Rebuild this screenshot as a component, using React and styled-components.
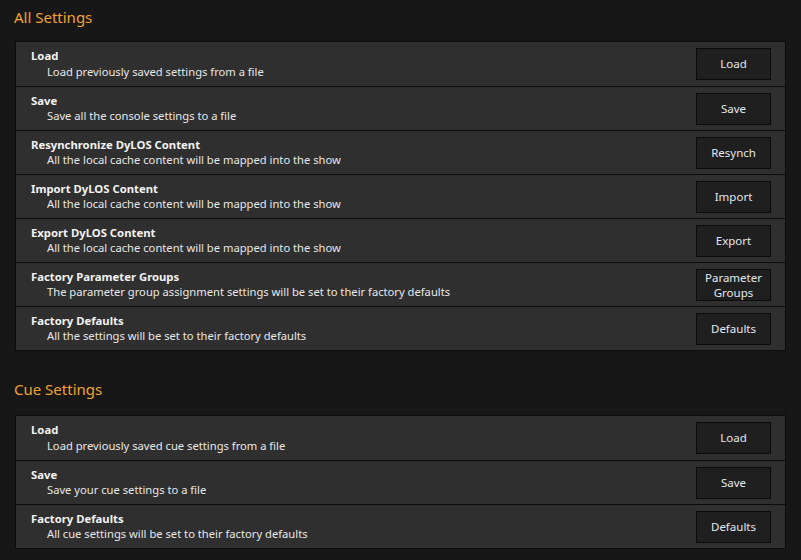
import React from 'react';
import styled, { createGlobalStyle } from 'styled-components';

const allSettings = [
	{ title: 'Load', desc: 'Load previously saved settings from a file', action: 'Load' },
	{ title: 'Save', desc: 'Save all the console settings to a file', action: 'Save' },
	{
		title: 'Resynchronize DyLOS Content',
		desc: 'All the local cache content will be mapped into the show',
		action: 'Resynch'
	},
	{
		title: 'Import DyLOS Content',
		desc: 'All the local cache content will be mapped into the show',
		action: 'Import'
	},
	{
		title: 'Export DyLOS Content',
		desc: 'All the local cache content will be mapped into the show',
		action: 'Export'
	},
	{
		title: 'Factory Parameter Groups',
		desc: 'The parameter group assignment settings will be set to their factory defaults',
		action: 'Parameter Groups'
	},
	{
		title: 'Factory Defaults',
		desc: 'All the settings will be set to their factory defaults',
		action: 'Defaults'
	}
];

const cueSettings = [
	{ title: 'Load', desc: 'Load previously saved cue settings from a file', action: 'Load' },
	{ title: 'Save', desc: 'Save your cue settings to a file', action: 'Save' },
	{
		title: 'Factory Defaults',
		desc: 'All cue settings will be set to their factory defaults',
		action: 'Defaults'
	}
];

const SettingsSection = ({ heading, items, first }) => (
	<Section $first={first}>
		<Heading $first={first}>{heading}</Heading>
		<Panel>
			{items.map(item => (
				<Row key={heading + item.title}>
					<RowText>
						<RowTitle>{item.title}</RowTitle>
						<RowDesc>{item.desc}</RowDesc>
					</RowText>
					<ActionBtn>{item.action}</ActionBtn>
				</Row>
			))}
		</Panel>
	</Section>
);

const App = () => (
	<>
		<GlobalStyle />
		<Page>
			<SettingsSection heading='All Settings' items={allSettings} first />
			<SettingsSection heading='Cue Settings' items={cueSettings} />
		</Page>
	</>
);

const fontStack = `'Noto Sans', 'Open Sans', sans-serif`;

const GlobalStyle = createGlobalStyle`
	html, body {
		margin: 0;
		padding: 0;
		background-color: #171717;
	}
	* {
		box-sizing: border-box;
	}
`;

const Page = styled.main`
	width: 801px;
	height: 560px;
	overflow: hidden;
	background-color: #171717;
	padding: 6px 15px 0 15px;
	font-family: ${fontStack};
`;

const Section = styled.section`
	margin-top: ${props => (props.$first ? '0' : '27px')};
`;

const Heading = styled.h2`
	margin: 0 0 ${props => (props.$first ? '13px' : '15px')} -1px;
	font-size: 15px;
	line-height: 22px;
	font-weight: 400;
	color: #f0a232;
`;

const Panel = styled.div`
	border: 1px solid #0c0c0c;
	background-color: #2f2f2f;
`;

const Row = styled.div`
	height: 44px;
	display: flex;
	align-items: center;
	justify-content: space-between;
	padding: 0 14px 0 15px;
	background-color: #2f2f2f;

	& + & {
		border-top: 1px solid #0c0c0c;
	}
`;

const RowText = styled.div`
	display: flex;
	flex-direction: column;
	margin-top: -1px;
`;

const RowTitle = styled.div`
	font-size: 11.3px;
	line-height: 15.5px;
	font-weight: 700;
	color: #f2f2f2;
`;

const RowDesc = styled.div`
	font-size: 11.2px;
	line-height: 15.5px;
	color: #e8e8e8;
	padding-left: 16px;
`;

const ActionBtn = styled.button`
	width: 75px;
	height: 32px;
	padding: 0 4px;
	border: 1px solid #0a0a0a;
	background-color: #1f1f1f;
	color: #e2e8ef;
	font-family: ${fontStack};
	font-size: 11.5px;
	line-height: 15.5px;
	text-align: center;
	cursor: pointer;
	outline: none;
`;

export default App;
